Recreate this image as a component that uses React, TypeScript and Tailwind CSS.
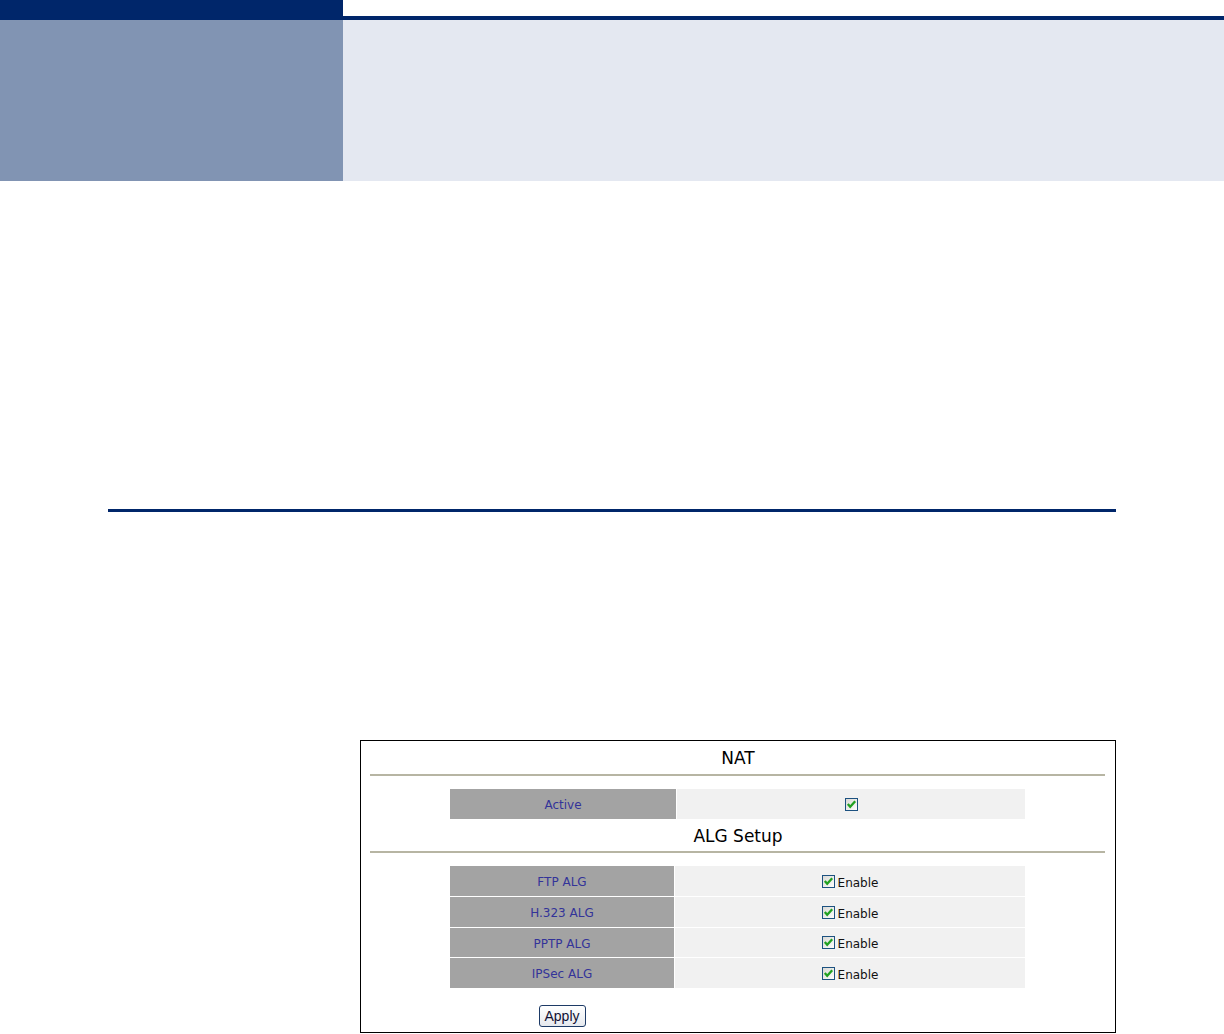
import React from "react";

const Check = () => (
  <svg width="13" height="13" viewBox="0 0 13 13" className="shrink-0">
    <defs>
      <linearGradient id="cbg" x1="0" y1="0" x2="1" y2="1">
        <stop offset="0" stopColor="#d8d8d4" />
        <stop offset="1" stopColor="#ffffff" />
      </linearGradient>
    </defs>
    <rect x="0.5" y="0.5" width="12" height="12" fill="url(#cbg)" stroke="#1c5180" />
    <path d="M2.8 6 L5.2 8.8 L10.2 3.2" fill="none" stroke="#21a121" strokeWidth="2.3" />
  </svg>
);

const rows = [
  { label: "FTP ALG", h: 30 },
  { label: "H.323 ALG", h: 30 },
  { label: "PPTP ALG", h: 29 },
  { label: "IPSec ALG", h: 30 },
];

export default function App() {
  return (
    <div className="w-[1224px] h-[1034px] bg-white overflow-hidden" style={{ fontFamily: '"DejaVu Sans", Verdana, sans-serif' }}>
      <div className="flex h-[181px]">
        <div className="w-[343px] flex flex-col">
          <div className="h-[20px] bg-[#00266a]" />
          <div className="flex-1 bg-[#8194b3]" />
        </div>
        <div className="flex-1 flex flex-col">
          <div className="h-[16px] bg-white" />
          <div className="h-[4px] bg-[#00266a]" />
          <div className="flex-1 bg-[#e4e8f1]" />
        </div>
      </div>

      <div className="mt-[328px] ml-[108px] w-[1008px] h-[3px] bg-[#00266a]" />

      <div className="mt-[228px] ml-[360px] w-[756px] h-[293px] border border-black flex flex-col">
        <div className="h-[33px] pt-[2px] flex items-center justify-center text-[17px] text-black">NAT</div>
        <div className="ml-[9px] mr-[10px] h-[2px] bg-[#b7b5a3]" />
        <div className="mt-[13px] ml-[89px] flex gap-[1px] h-[30px]">
          <div className="w-[226px] pt-[2px] bg-[#a3a3a3] flex items-center justify-center text-[12px] text-[#333399]">Active</div>
          <div className="w-[348px] bg-[#f1f1f1] flex items-center justify-center">
            <Check />
          </div>
        </div>
        <div className="h-[32px] pt-[3px] flex items-center justify-center text-[17px] text-black">ALG Setup</div>
        <div className="ml-[9px] mr-[10px] h-[2px] bg-[#b7b5a3]" />
        <div className="mt-[13px] ml-[89px] flex flex-col gap-[1px]">
          {rows.map((r) => (
            <div key={r.label} className="flex gap-[1px]" style={{ height: r.h }}>
              <div className="w-[224px] pt-[2px] bg-[#a3a3a3] flex items-center justify-center text-[12px] text-[#333399]">{r.label}</div>
              <div className="w-[350px] bg-[#f1f1f1] flex items-center justify-center gap-[3px] text-[12px] text-[#111111]">
                <Check />
                <span className="pt-[3px]">Enable</span>
              </div>
            </div>
          ))}
        </div>
        <div className="mt-[17px] ml-[89px] w-[224px] flex justify-center">
          <button
            className="w-[47px] h-[22px] rounded-[3px] border border-[#1d3a66] bg-gradient-to-b from-white to-[#e6e9ee] text-[14px] text-[#111133] leading-none"
            style={{ fontFamily: '"Liberation Sans", Arial, sans-serif' }}
          >
            Apply
          </button>
        </div>
      </div>
    </div>
  );
}
